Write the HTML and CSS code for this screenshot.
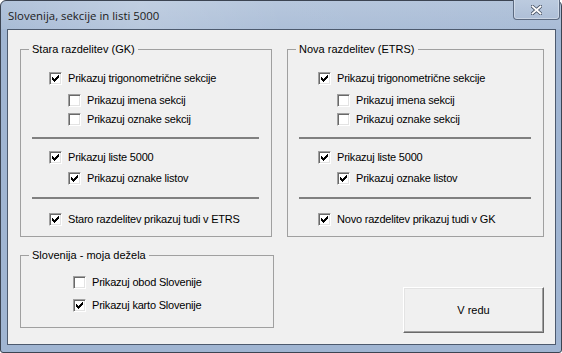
FILE: index.html
```html
<!DOCTYPE html>
<html lang="sl">
  <head>
    <meta charset="utf-8">
    <title>Slovenija, sekcije in listi 5000</title>
    <link rel="stylesheet" href="styles.css">
  </head>
  <body>
    <div class="window">
      <div class="titlebar">
        <span class="title">Slovenija, sekcije in listi 5000</span>
        <div class="close">
          <svg width="11" height="10" viewBox="0 0 11 10">
            <path d="M1.5 1.5 L9.5 8.5 M9.5 1.5 L1.5 8.5" stroke="#4b5668" stroke-width="3.6" stroke-linecap="square"/>
            <path d="M1.5 1.5 L9.5 8.5 M9.5 1.5 L1.5 8.5" stroke="#fff" stroke-width="1.8" stroke-linecap="square"/>
          </svg>
        </div>
      </div>

      <div class="client">
        <div class="row-top">
          <fieldset class="group group-gk">
            <legend>Stara razdelitev (GK)</legend>
            <div class="check main first"><span class="box on"></span>Prikazuj trigonometrične sekcije</div>
            <div class="check sub gap9"><span class="box"></span>Prikazuj imena sekcij</div>
            <div class="check sub gap6"><span class="box"></span>Prikazuj oznake sekcij</div>
            <div class="sep"></div>
            <div class="check main after-sep"><span class="box on"></span>Prikazuj liste 5000</div>
            <div class="check sub gap8"><span class="box on"></span>Prikazuj oznake listov</div>
            <div class="sep"></div>
            <div class="check main last"><span class="box on"></span>Staro razdelitev prikazuj tudi v ETRS</div>
          </fieldset>

          <fieldset class="group group-etrs">
            <legend>Nova razdelitev (ETRS)</legend>
            <div class="check main first"><span class="box on"></span>Prikazuj trigonometrične sekcije</div>
            <div class="check sub gap9"><span class="box"></span>Prikazuj imena sekcij</div>
            <div class="check sub gap6"><span class="box"></span>Prikazuj oznake sekcij</div>
            <div class="sep"></div>
            <div class="check main after-sep"><span class="box on"></span>Prikazuj liste 5000</div>
            <div class="check sub gap8"><span class="box on"></span>Prikazuj oznake listov</div>
            <div class="sep"></div>
            <div class="check main last"><span class="box on"></span>Novo razdelitev prikazuj tudi v GK</div>
          </fieldset>
        </div>

        <div class="row-bottom">
          <fieldset class="group group-slo">
            <legend>Slovenija - moja dežela</legend>
            <div class="check slo first"><span class="box"></span>Prikazuj obod Slovenije</div>
            <div class="check slo second"><span class="box on"></span>Prikazuj karto Slovenije</div>
          </fieldset>

          <div class="button">V redu</div>
        </div>
      </div>
    </div>
  </body>
</html>
```

FILE: styles.css
```css
* {
  box-sizing: border-box;
}

html, body {
  margin: 0;
  padding: 0;
}

body {
  width: 562px;
  height: 353px;
  overflow: hidden;
  font-family: "Liberation Sans", Arial, sans-serif;
  font-size: 11px;
  color: #000;
}

/* window frame */
.window {
  width: 562px;
  height: 353px;
  display: flex;
  flex-direction: column;
  padding: 0 5px 7px 6px;
  border: 1px solid #3c4452;
  border-radius: 6px 6px 3px 3px;
  background: #a0b5d2;
  background-image: linear-gradient(180deg, #b3c4db 0px, #a9bcd6 28px, #a0b5d2 29px);
}

.titlebar {
  height: 28px;
  display: flex;
  align-items: flex-start;
  justify-content: space-between;
  background: linear-gradient(90deg, rgba(255,255,255,0) 0%, rgba(255,255,255,0.18) 25%, rgba(255,255,255,0.05) 50%, rgba(255,255,255,0) 100%);
  margin: 0 -5px 0 -6px;
  padding: 0 1px 0 7px;
}

.title {
  font-family: "Open Sans", "Noto Sans", sans-serif;
  font-size: 11.4px;
  line-height: 16px;
  margin-top: 7px;
  color: #1b1b1b;
}

.close {
  width: 47px;
  height: 20px;
  display: flex;
  align-items: center;
  justify-content: center;
  margin-top: -1px;
  border: 1px solid #5c6a80;
  border-top: none;
  border-radius: 0 0 4px 4px;
  background: linear-gradient(180deg, #bccbdf 0%, #aebfd7 100%);
  box-shadow: inset 0 -1px 0 rgba(255,255,255,0.35), inset 1px 0 0 rgba(255,255,255,0.35), inset -1px 0 0 rgba(255,255,255,0.35);
}

/* dialog body */
.client {
  height: 316px;
  border: 1px solid #4d5a6e;
  background: #f0f0f0;
  padding: 13px 11px 0 12px;
  display: flex;
  flex-direction: column;
  gap: 12px;
}

.row-top {
  display: flex;
  gap: 15px;
}

.row-bottom {
  display: flex;
  align-items: flex-start;
}

.group {
  margin: 0;
  padding: 0 0 10px 0;
  min-width: 0;
  border: 1px solid #a0a0a0;
}

.group legend {
  margin-left: 8px;
  padding: 0 3px;
  line-height: 13px;
}

.group-gk {
  width: 252px;
}

.group-etrs {
  width: 257px;
}

.group-slo {
  width: 254px;
  padding-bottom: 15px;
}

.check {
  display: flex;
  align-items: center;
  height: 13px;
  line-height: 13px;
  white-space: nowrap;
  letter-spacing: -0.2px;
}

.check .box {
  flex: none;
  width: 13px;
  height: 13px;
  margin-right: 6px;
  background: #fff;
  border-top: 1px solid #a0a0a0;
  border-left: 1px solid #a0a0a0;
  border-bottom: 1px solid #fff;
  border-right: 1px solid #fff;
  box-shadow: inset 1px 1px 0 #696969, inset -1px -1px 0 #e3e3e3;
}

.check .box.on {
  background: #fff url("data:image/svg+xml,%3Csvg xmlns='http://www.w3.org/2000/svg' width='11' height='11'%3E%3Cpath d='M2 4h1v3H2zM3 5h1v3H3zM4 6h1v3H4zM5 5h1v3H5zM6 4h1v3H6zM7 3h1v3H7zM8 2h1v3H8z' fill='%23000'/%3E%3C/svg%3E") no-repeat 0 0;
}

.check.main {
  margin-left: 28px;
}

.check.sub {
  margin-left: 47px;
}

.group-etrs .check.main {
  margin-left: 30px;
}

.group-etrs .check.sub {
  margin-left: 49px;
}

.check.first {
  margin-top: 16px;
}

.check.gap9 {
  margin-top: 9px;
}

.check.gap6 {
  margin-top: 6px;
}

.check.gap8 {
  margin-top: 8px;
}

.check.after-sep {
  margin-top: 12px;
}

.check.last {
  margin-top: 14px;
}

.sep {
  height: 2px;
  margin: 11px 12px 0 11px;
  background: #808080;
}

.check.gap8 + .sep {
  margin-top: 12px;
}

.check.slo {
  margin-left: 52px;
}

.check.slo.first {
  margin-top: 14px;
}

.check.slo.second {
  margin-top: 10px;
}

.button {
  width: 141px;
  height: 46px;
  margin-top: 38px;
  margin-left: auto;
  display: flex;
  align-items: center;
  justify-content: center;
  background: #f0f0f0;
  border-top: 1px solid #fff;
  border-left: 1px solid #fff;
  border-right: 1px solid #696969;
  border-bottom: 1px solid #696969;
  box-shadow: inset -1px -1px 0 #a0a0a0, inset 1px 1px 0 #e3e3e3;
}
```
